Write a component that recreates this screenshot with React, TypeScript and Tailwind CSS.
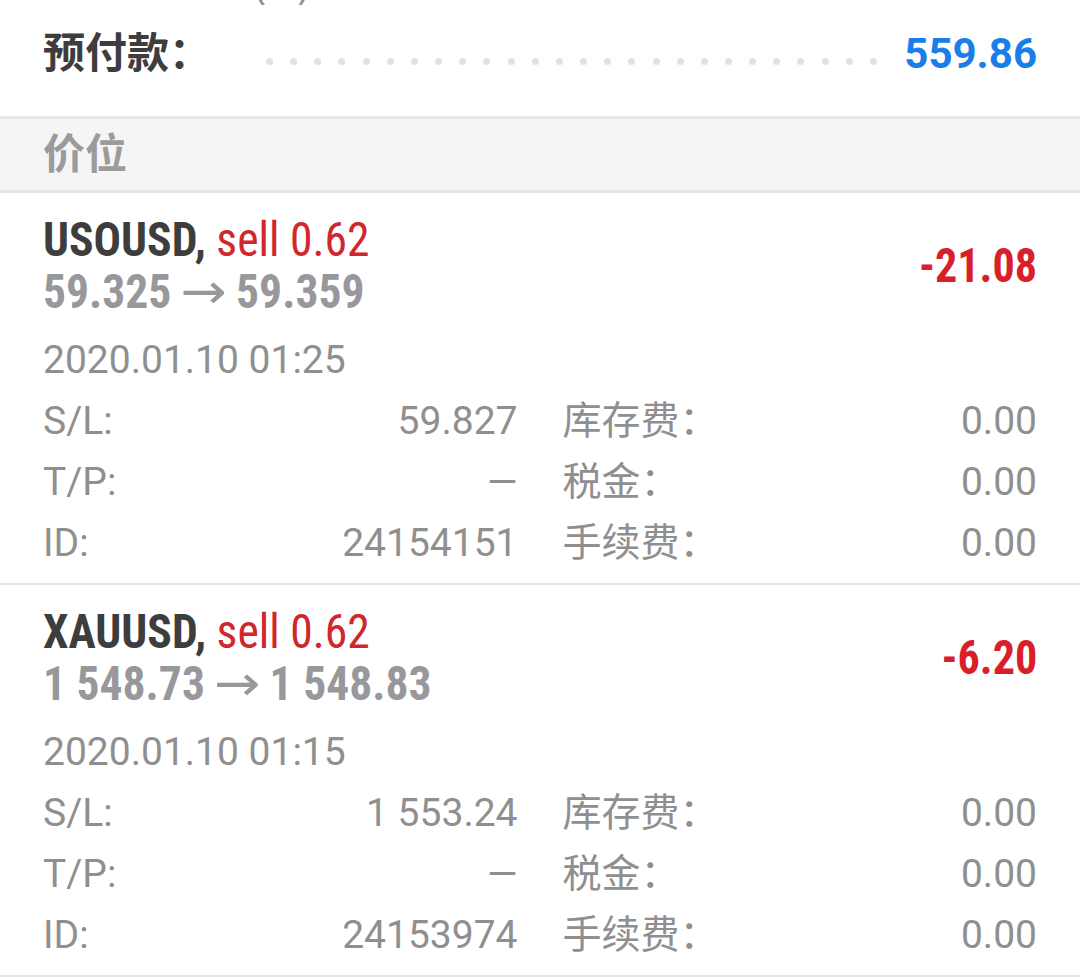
import React from "react";

type Position = {
  symbol: string;
  side: string;
  openPrice: string;
  price: string;
  profit: string;
  time: string;
  sl: string;
  tp: string;
  id: string;
};

const positions: Position[] = [
  {
    symbol: "USOUSD",
    side: "sell 0.62",
    openPrice: "59.325",
    price: "59.359",
    profit: "-21.08",
    time: "2020.01.10 01:25",
    sl: "59.827",
    tp: "—",
    id: "24154151",
  },
  {
    symbol: "XAUUSD",
    side: "sell 0.62",
    openPrice: "1 548.73",
    price: "1 548.83",
    profit: "-6.20",
    time: "2020.01.10 01:15",
    sl: "1 553.24",
    tp: "—",
    id: "24153974",
  },
];

// no condensed face is installed, so Roboto is narrowed with a horizontal scale
const condensed =
  "font-['Roboto_Condensed','Liberation_Sans_Narrow','Roboto',sans-serif] font-stretch-condensed";

function DetailRow({ label, value, label2, value2 }: { label: string; value: string; label2: string; value2: string }) {
  return (
    <div className="grid grid-cols-2 gap-x-[45px] h-[61px] items-center text-[39px] text-[#8f8f8f]">
      <div className="flex justify-between">
        <span>{label}</span>
        <span>{value}</span>
      </div>
      <div className="flex justify-between">
        <span>{label2}</span>
        <span>{value2}</span>
      </div>
    </div>
  );
}

function PositionRow({ p }: { p: Position }) {
  return (
    <div className="border-b-2 border-[#e6e6e6] px-[43px] pt-[21px] pb-[9px]">
      {/* symbol, side and prices */}
      <div className={`flex items-center justify-between ${condensed}`}>
        <div className="flex flex-col origin-left scale-x-[0.93] whitespace-nowrap">
          <div className="h-[52px] leading-[52px] text-[49px]">
            <span className="font-bold text-[#3d3d3d]">{p.symbol},</span>{" "}
            <span className="text-[#d0262c]">{p.side}</span>
          </div>
          <div className="h-[52px] leading-[52px] text-[49px] font-bold text-[#98989c]">
            {p.openPrice}{" "}
            <span className="inline-block mx-[5px] scale-x-[1.35] font-['DejaVu_Sans',sans-serif] font-normal">→</span>{" "}
            {p.price}
          </div>
        </div>
        <div className="origin-right scale-x-[0.9] text-[49px] font-bold text-[#d9202a]">{p.profit}</div>
      </div>
      <div className="mt-[12px] h-[61px] leading-[61px] text-[39px] text-[#8f8f8f]">{p.time}</div>
      <DetailRow label="S/L:" value={p.sl} label2="库存费：" value2="0.00" />
      <DetailRow label="T/P:" value={p.tp} label2="税金：" value2="0.00" />
      <DetailRow label="ID:" value={p.id} label2="手续费：" value2="0.00" />
    </div>
  );
}

export default function App() {
  const dots = Array.from({ length: 26 });
  return (
    <div className="w-[1080px] h-[977px] overflow-hidden bg-white font-['Roboto','Noto_Sans_CJK_SC',sans-serif]">
      {/* prepayment row */}
      <div className="h-[116px] flex flex-col">
        <div className="h-[5px] overflow-hidden">
          <div className="ml-[254px] -mt-[32px] text-[39px] leading-[39px] text-[#8f8f8f]">(%)</div>
        </div>
        <div className="h-[96px] flex items-center px-[43px]">
          <div className="w-[223px] text-[42px] font-bold text-[#3d3d3d]">预付款：</div>
          <div className="w-[611px] mt-4 flex justify-between">
            {dots.map((_, i) => (
              <span key={i} className="w-[7px] h-[7px] rounded-full bg-[#e1e1e1]" />
            ))}
          </div>
          <div className="flex-1 text-right text-[42px] font-bold text-[#1a7ee8]">559.86</div>
        </div>
      </div>
      {/* section header */}
      <div className="border-y-[3px] border-[#e6e6e6] bg-[#f5f5f5] h-[77px] flex items-center px-[43px]">
        <span className="text-[42px] font-bold text-[#9b9b9b]">价位</span>
      </div>
      {positions.map((p) => (
        <PositionRow key={p.id} p={p} />
      ))}
    </div>
  );
}
